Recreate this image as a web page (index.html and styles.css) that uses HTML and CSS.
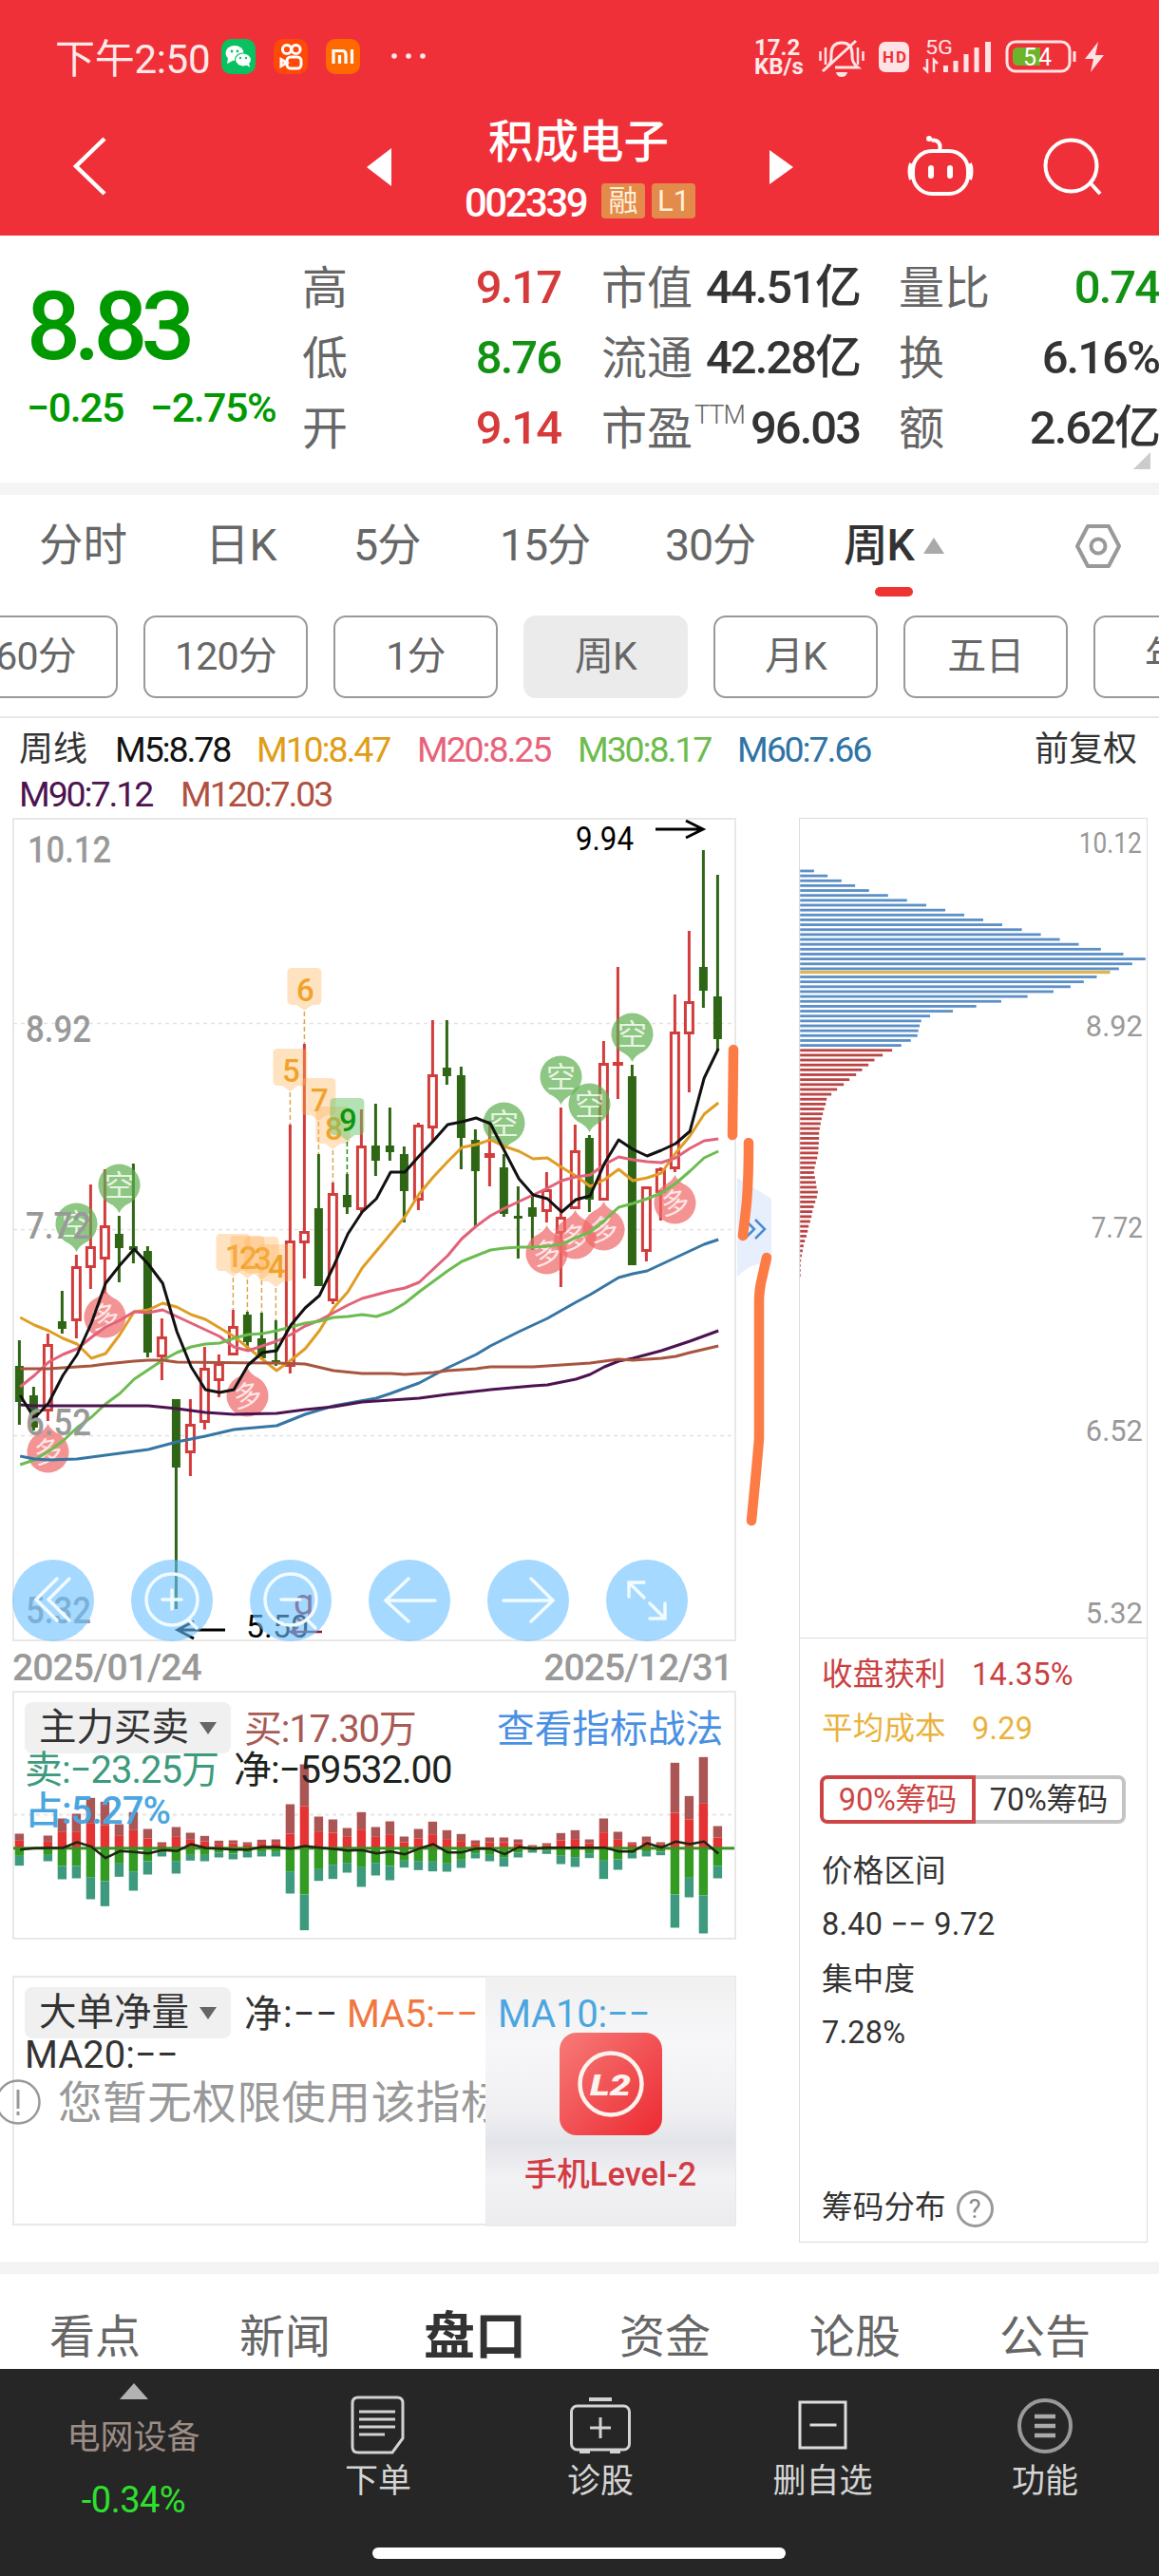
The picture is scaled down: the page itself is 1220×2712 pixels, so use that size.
FILE: index.html
```html
<!DOCTYPE html>
<html lang="zh-CN">
<head>
<meta charset="utf-8">
<title>积成电子 002339</title>
<link rel="stylesheet" href="styles.css">
</head>
<body>
<header class="top">
  <div class="status">
    <span class="clock">下午2:50</span>
    <svg class="apps" width="236" height="40" viewBox="228 40 236 40">
      <rect x="233" y="41" width="36" height="37" rx="10" fill="#08c160"/>
      <ellipse cx="247" cy="56" rx="9.5" ry="8" fill="#fff"/><path d="M240 61l-1 6 6-3z" fill="#fff"/>
      <ellipse cx="256" cy="63" rx="8.5" ry="7" fill="#fff" stroke="#08c160" stroke-width="1.2"/><path d="M259 68l4 3-1-5z" fill="#fff"/>
      <g fill="#08c160"><circle cx="244" cy="54" r="1.4"/><circle cx="250" cy="54" r="1.4"/><circle cx="253" cy="61" r="1.2"/><circle cx="259" cy="61" r="1.2"/></g>
      <rect x="288" y="41" width="36" height="37" rx="10" fill="#ff4906"/>
      <g fill="none" stroke="#fff" stroke-width="3"><circle cx="302" cy="52" r="4.6"/><circle cx="311.5" cy="52" r="4.6"/><rect x="302" y="60" width="15" height="12" rx="4"/><path d="M302 66l-6-3.500v7z"/></g>
      <rect x="343" y="41" width="36" height="37" rx="10" fill="#ff6a00"/>
      <path d="M351 67V53.500h9q4 0 4 4V67M357.500 58v9M370.500 52v15" fill="none" stroke="#fff" stroke-width="3.200"/>
      <g fill="#ffe9e9"><circle cx="415" cy="59" r="2.800"/><circle cx="430" cy="59" r="2.800"/><circle cx="445" cy="59" r="2.800"/></g>
    </svg>
    <span class="speed">17.2<br>KB/s</span>
    <svg class="sys" width="310" height="44" viewBox="856 38 310 44">
      <g fill="none" stroke="#ffe3e4" stroke-width="3">
        <path d="M871 70q4-3 4-10v-3q0-12 11-12t11 12v3q0 6 6 11h-24M866 75L901 43"/>
        <path d="M869 50v18M863.500 54v10M903 50v18M908.500 54v10" stroke-width="2.500"/>
      </g>
      <path d="M880 76h12q-1 5-6 5t-6-5z" fill="#ffe3e4"/>
      <rect x="925" y="44" width="32" height="32" rx="7" fill="#ffe3e4"/>
      <text x="929" y="66" font-size="17" font-weight="700" fill="#ef3037" textLength="25">HD</text>
      <text x="974" y="57" font-size="21" fill="#ffe3e4" textLength="29" lengthAdjust="spacingAndGlyphs">5G</text>
      <path d="M976 62v13l-4-4M983 76V63l4 4" fill="none" stroke="#ffe3e4" stroke-width="2.500"/>
      <path d="M993 69h5v7h-5zM1003.500 64h5v12h-5zM1014.500 57h5v19h-5zM1025.500 50h5v26h-5zM1037 44h6v32h-6z" fill="#ffe3e4"/>
      <rect x="1060" y="44" width="66" height="31" rx="9" fill="none" stroke="#ffe3e4" stroke-width="3"/>
      <path d="M1095 50v19h-23q-6 0-6-5v-9q0-5 6-5z" fill="#6cb52a"/>
      <path d="M1131 54v11" stroke="#ffe3e4" stroke-width="3"/>
      <text x="1077" y="69" font-size="25" fill="#fff" textLength="30">54</text>
      <path d="M1156 44l-14 18h9l-3 14 14-18h-9z" fill="#ffe3e4"/>
    </svg>
  </div>
  <div class="titlebar">
    <svg class="back" width="46" height="70" viewBox="72 138 46 70"><path d="M110 145L80 174l30 29" fill="none" stroke="#fff" stroke-width="4.500"/></svg>
    <svg class="prev" width="26" height="40" viewBox="0 0 26 40"><path d="M26 0v40L0 20z" fill="#fff"/></svg>
    <div class="name">
      <h1>积成电子</h1>
      <div class="code"><span>002339</span><b>融</b><b>L1</b></div>
    </div>
    <svg class="next" width="26" height="36" viewBox="0 0 26 36"><path d="M0 0v36l25-18z" fill="#fff"/></svg>
    <svg class="robot" width="76" height="68" viewBox="952 141 76 68">
      <g fill="none" stroke="#fff" stroke-width="4"><rect x="961" y="159" width="58" height="45" rx="20"/><path d="M989 159q2-9-4-11-3-1-5 0M959 172q-3 8 0 17M1021 172q3 8 0 17"/></g>
      <circle cx="978" cy="146" r="3" fill="#fff"/><path d="M980 177v8M1000 177v8" stroke="#fff" stroke-width="6" stroke-linecap="round"/>
    </svg>
    <svg class="search" width="66" height="66" viewBox="1098 142 66 66"><g fill="none" stroke="#fff" stroke-width="4"><circle cx="1129.500" cy="174.500" r="27"/><path d="M1150 193l10 11"/></g></svg>
  </div>
</header>

<section class="quote">
  <div class="price">
    <div class="last">8.83</div>
    <div class="chg"><span>−0.25</span><span>−2.75%</span></div>
  </div>
  <dl>
    <dt>高</dt><dd class="up">9.17</dd>
    <dt>低</dt><dd class="down">8.76</dd>
    <dt>开</dt><dd class="up">9.14</dd>
  </dl>
  <dl>
    <dt>市值</dt><dd>44.51亿</dd>
    <dt>流通</dt><dd>42.28亿</dd>
    <dt>市盈<sup>TTM</sup></dt><dd>96.03</dd>
  </dl>
  <dl>
    <dt>量比</dt><dd class="down">0.74</dd>
    <dt>换</dt><dd>6.16%</dd>
    <dt>额</dt><dd>2.62亿</dd>
  </dl>
  <i class="corner"></i>
</section>

<nav class="periods">
  <span class="p1">分时</span><span class="p2">日K</span><span class="p3">5分</span><span class="p4">15分</span><span class="p5">30分</span><span class="p6 on">周K<i></i></span>
  <svg width="50" height="48" viewBox="0 0 50 48"><g fill="none" stroke="#999" stroke-width="4"><path d="M14 3h22l11 21-11 21H14L3 24z" stroke-linejoin="round"/><circle cx="25" cy="24" r="7.500"/></g></svg>
</nav>
<nav class="pills">
  <span>60分</span><span>120分</span><span>1分</span><span class="on">周K</span><span>月K</span><span>五日</span><span>年K</span>
</nav>

<section class="legend">
  <p><span class="cap">周线</span><span class="m5">M5:8.78</span><span class="m10">M10:8.47</span><span class="m20">M20:8.25</span><span class="m30">M30:8.17</span><span class="m60">M60:7.66</span><span class="adj">前复权</span></p>
  <p><span class="m90">M90:7.12</span><span class="m120">M120:7.03</span></p>
</section>

<main class="charts">
  <div class="left">
    <svg id="kline" width="762" height="868" viewBox="13 861 762 868"></svg>
    <div class="dates"><span>2025/01/24</span><span>2025/12/31</span></div>
    <section class="panel flowpanel">
      <svg id="flow" width="762" height="262" viewBox="13 1780.500 762 262"></svg>
      <div class="lines">
        <p><span class="pick">主力买卖<i></i></span><span class="buy">买:17.30万</span><span class="link">查看指标战法</span></p>
        <p><span class="sell">卖:−23.25万</span><span class="net">净:−59532.00</span></p>
        <p><span class="pct">占:5.27%</span></p>
      </div>
    </section>
    <section class="panel bigpanel">
      <div class="promo">
        <svg width="110" height="110" viewBox="0 0 110 110">
          <defs><linearGradient id="lv" x1="0" y1="0" x2="1" y2="1"><stop offset="0" stop-color="#f77b78"/><stop offset="1" stop-color="#ec2a32"/></linearGradient></defs>
          <rect x="1" y="1" width="108" height="108" rx="18" fill="url(#lv)"/>
          <circle cx="55" cy="55" r="32.500" fill="none" stroke="#fdf3ee" stroke-width="4.500"/>
          <text x="33" y="67" font-size="32" font-weight="900" font-style="italic" fill="#fdf3ee" textLength="43" lengthAdjust="spacingAndGlyphs">L2</text>
        </svg>
        <span>手机Level-2</span>
      </div>
      <div class="lines">
        <p><span class="pick">大单净量<i></i></span><span class="n0">净:−−</span><span class="n5">MA5:−−</span><span class="n10">MA10:−−</span></p>
        <p><span class="n20">MA20:−−</span></p>
      </div>
      <div class="deny">
        <svg width="50" height="50" viewBox="0 0 50 50"><circle cx="25" cy="25" r="22.500" fill="none" stroke="#999" stroke-width="2.500"/><path d="M25 12v20M25 35v4" stroke="#999" stroke-width="3"/></svg>
        <span>您暂无权限使用该指标</span>
      </div>
    </section>
  </div>

  <aside class="chips">
    <svg id="chip" width="367" height="864" viewBox="841 861 367 864"></svg>
    <div class="info">
      <p class="red"><span>收盘获利</span><span>14.35%</span></p>
      <p class="gold"><span>平均成本</span><span>9.29</span></p>
      <div class="seg"><span class="on">90%筹码</span><span>70%筹码</span></div>
      <p>价格区间</p>
      <p class="num">8.40 −− 9.72</p>
      <p>集中度</p>
      <p class="num">7.28%</p>
      <p class="foot">筹码分布<i>?</i></p>
    </div>
  </aside>

  <svg class="marks" width="50" height="520" viewBox="765 1095 50 520">
    <path d="M776 1240q20 12 36 22v70q-18-6-36 12z" fill="#e6effb"/>
    <path d="M784 1284l10 10-10 10M795 1284l10 10-10 10" fill="none" stroke="#4a8bd4" stroke-width="2.500"/>
    <g fill="none" stroke="#fd7b45" stroke-width="10.500" stroke-linecap="round" stroke-linejoin="round">
      <path d="M772 1105L771 1195M788 1203Q788 1250 785 1275L782 1301M807 1324L802 1346Q799 1358 799 1372V1515Q796 1550 794 1570L791 1601"/>
    </g>
  </svg>
</main>

<nav class="news">
  <span>看点</span><span>新闻</span><span class="on">盘口</span><span>资金</span><span>论股</span><span>公告</span>
</nav>

<footer class="bar">
  <div class="sector"><i></i><span>电网设备</span><b>-0.34%</b></div>
  <div class="act"><svg width="66" height="62" viewBox="0 0 66 62"><g fill="none" stroke="#d2d2d2" stroke-width="3"><path d="M12 2h41q6 0 6 6v37L48 60H12q-6 0-6-6V8q0-6 6-6z"/><path d="M13 17h38M13 25h38M13 33h38M13 41h27"/></g></svg><span>下单</span></div>
  <div class="act"><svg width="66" height="62" viewBox="0 0 66 62"><g fill="none" stroke="#d2d2d2" stroke-width="3"><rect x="2.500" y="11" width="61" height="46" rx="6"/><path d="M33 23v22M22 34h22"/><path d="M21 4h24M11 59h11M43 59h11" stroke-width="4"/></g></svg><span>诊股</span></div>
  <div class="act"><svg width="66" height="62" viewBox="0 0 66 62"><g fill="none" stroke="#dcdcdc" stroke-width="3"><rect x="9" y="7" width="48" height="48"/><path d="M19.500 31h28"/></g></svg><span>删自选</span></div>
  <div class="act"><svg width="66" height="62" viewBox="0 0 66 62"><circle cx="33" cy="32" r="27" fill="none" stroke="#999" stroke-width="4"/><path d="M22 22h22M22 32h22M22 42h22" stroke="#aaa" stroke-width="4.500"/></svg><span>功能</span></div>
  <div class="home"></div>
</footer>
<script src="charts.js"></script>
</body>
</html>
```

FILE: styles.css
```css
* { box-sizing: border-box; }
body {
  margin: 0;
  width: 1220px;
  height: 2712px;
  overflow: hidden;
  background: #fff;
  color: #333;
  font-family: Roboto, "Noto Sans CJK SC", sans-serif;
}
h1, p, dl, dt, dd { margin: 0; font-weight: 400; }
i { font-style: normal; }
svg { display: block; flex: none; }
svg text { font-family: Roboto, "Noto Sans CJK SC", sans-serif; }

/* header */
.top { height: 248px; background: #f03038; color: #fff; }
.status { height: 100px; padding: 20px 0 0 58px; display: flex; align-items: center; }
.clock { width: 170px; font-size: 42px; letter-spacing: -.3px; color: #ffe9e9; white-space: nowrap; margin-top: -4px; }
.speed { margin-left: 330px; width: 62px; font-size: 24px; line-height: 20px; font-weight: 700; color: #ffe9e9; }
.titlebar { height: 148px; padding-left: 72px; display: flex; align-items: flex-start; }
.back { margin-top: 39px; }
.prev { margin: 56px 0 0 268px; }
.name { width: 394px; margin-right: 4px; text-align: center; }
.name h1 { margin-top: 17px; font-size: 47.500px; line-height: 66px; font-weight: 500; }
.code { height: 44px; display: flex; align-items: center; margin: 6px 0 0 77px; font-size: 42px; font-weight: 500; letter-spacing: -2.500px; }
.code span { width: 144px; text-align: left; margin-top: 4px; }
.code b { width: 46px; height: 37px; margin-right: 7px; border-radius: 4px; background: #e38b4b; color: #fff0d8; font-size: 31px; font-weight: 400; letter-spacing: 0; line-height: 37px; }
.next { margin-top: 58px; }
.robot { margin: 41px 0 0 116px; }
.search { margin: 42px 0 0 68px; }

/* quote */
.quote { position: relative; height: 273px; padding-top: 16px; border-bottom: 13px solid #f4f4f4; display: flex; }
.price { width: 318px; padding-left: 28px; color: #009900; white-space: nowrap; }
.last { margin-top: 30px; height: 100px; line-height: 100px; font-size: 100px; font-weight: 500; letter-spacing: -7px; }
.chg { margin-top: 10px; font-size: 43px; line-height: 50px; font-weight: 500; letter-spacing: -1.500px; display: flex; }
.chg span:first-child { width: 130px; }
.quote dl { width: 272px; margin-right: 43px; display: grid; grid-template-columns: auto 1fr; grid-auto-rows: 74px; line-height: 74px; }
.quote dl:nth-of-type(2) { margin-right: 41px; }
.quote dl:nth-of-type(3) { width: 274px; margin-right: 0; }
.quote dt { display: flex; font-size: 48px; color: #666; font-weight: 400; font-family: "Noto Sans CJK SC", sans-serif; line-height: 70px; white-space: nowrap; width: 0; }
.quote sup { font-family: Roboto, sans-serif; font-size: 27px; line-height: 50px; margin-left: 2px; letter-spacing: -1px; font-weight: 300; }
.quote dd { text-align: right; font-size: 49px; font-weight: 500; letter-spacing: -2px; padding-top: 2px; height: 74px; white-space: nowrap; }
.up { color: #d63a3a; }
.down { color: #129212; }
.corner { position: absolute; left: 1193px; top: 228px; border-left: 18px solid transparent; border-bottom: 18px solid #ccc; }

/* period tabs */
.periods { height: 127px; padding-left: 41px; display: flex; font-size: 46.500px; line-height: 107px; color: #666; white-space: nowrap; }
.p1 { width: 175px; } .p2 { width: 156px; } .p3 { width: 154px; } .p4 { width: 174px; } .p5 { width: 188px; } .p6 { width: 243px; }
.p3, .p4, .p5 { letter-spacing: -1.200px; }
.p6.on { position: relative; font-weight: 500; color: #333; letter-spacing: -1px; }
.p6 i { display: inline-block; margin-left: 10px; border: 11px solid transparent; border-top: 0; border-bottom: 17px solid #aaa; vertical-align: 7px; }
.p6::after { content: ""; position: absolute; left: 33px; top: 97px; width: 40px; height: 10px; border-radius: 5px; background: #e33; }
.periods svg { margin-top: 30px; }
.pills { height: 108px; padding-bottom: 20px; width: 1220px; overflow: hidden; border-bottom: 2px solid #e8e8e8; display: flex; gap: 27px; }
.pills span { flex: none; width: 173px; height: 87px; border: 2px solid #999; border-radius: 13px; text-align: center; font-size: 41px; line-height: 83px; color: #666; letter-spacing: -.8px; }
.pills span:first-child { margin-left: -49px; }
.pills .on { background: #ebebeb; border-color: #ebebeb; }

/* moving average legend */
.legend { height: 105px; padding: 10px 0 0 20px; font-size: 37.500px; font-weight: 500; letter-spacing: -2.100px; }
.legend p { height: 47px; line-height: 47px; display: flex; white-space: nowrap; }
.cap { width: 101px; font-size: 36px; letter-spacing: 0; font-weight: 400; }
.m5 { width: 149px; color: #111; }
.m10 { width: 169px; color: #e09d16; }
.m20 { width: 169px; color: #e8627a; }
.m30 { width: 168px; color: #6cbc4c; }
.m60 { width: 313px; color: #2f74a5; }
.m90 { width: 170px; color: #4d1250; }
.m120 { color: #b05040; }
.adj { font-size: 36px; font-weight: 400; letter-spacing: 0; }

/* charts */
.charts { position: relative; height: 1520px; display: flex; padding-left: 13px; }
.left { width: 828px; }
.dates { height: 51px; width: 760px; display: flex; justify-content: space-between; padding: 0 2px 0 0; font-size: 39px; line-height: 54px; font-weight: 500; color: #999; letter-spacing: -.9px; }
.panel { position: relative; width: 762px; height: 262px; border: 2px solid #e8e8e8; overflow: visible; }
.panel > svg { position: absolute; left: -2px; top: -2px; }
.bigpanel { margin-top: 38px; height: 263px; }
.lines { position: relative; padding: 10px 0 0 11px; font-size: 40px; font-weight: 400; white-space: nowrap; }
.lines p { display: flex; height: 43px; line-height: 43px; align-items: center; }
.lines p:first-child { height: 54px; }
.lines p:first-child span { padding-top: 2px; }
.lines p + p { position: relative; top: -4px; }
.pick { width: 217px; height: 54px; margin-right: 14px; padding-left: 15px; border-radius: 8px; background: #f0f0f0; font-size: 39.500px; line-height: 50px; }
.pick i { display: inline-block; margin-left: 11px; border: 9px solid transparent; border-bottom: 0; border-top: 13px solid #666; vertical-align: 6px; }
.buy { width: 266px; color: #a85a55; letter-spacing: -1.200px; }
.link { color: #4a90e2; font-size: 39.700px; }
.sell { width: 220px; color: #3d9a7d; }
.net { color: #1c231c; }
.pct { color: #4ba6e0; letter-spacing: -.9px; font-weight: 500; }
.flowpanel .lines p + p { letter-spacing: -1px; }
.n0 { width: 108px; letter-spacing: 1px; }
.n5 { width: 159px; color: #f07840; letter-spacing: -.2px; }
.n10 { color: #4ba6e0; letter-spacing: -.2px; }
.promo { position: absolute; left: 496px; top: -1px; width: 263px; height: 263px; padding-top: 58px; display: flex; flex-direction: column; align-items: center; background: linear-gradient(180deg, #f0f0f1 0, #f7f7f9 28%, #efeff2 55%, #e3e4e9 66%, #f2f1f4 80%, #ecebed 100%); color: #d23c44; font-size: 34.500px; font-weight: 500; line-height: 44px; }
.promo span { margin-top: 18px; }
.deny { position: relative; width: 517px; margin-left: -21px; height: 60px; margin-top: -5px; overflow: hidden; display: flex; align-items: center; color: #999; font-size: 46.500px; font-weight: 400; letter-spacing: .6px; line-height: 60px; white-space: nowrap; }
.deny svg { margin-top: -3px; }
.deny span { margin-left: 17px; }

/* chip distribution */
.chips { width: 367px; height: 1500px; border: 1px solid #ddd; }
.chips > svg { margin: -1px 0 0 -1px; border-bottom: 1px solid #ddd; }
.info { padding: 10px 0 0 23px; font-size: 32.500px; font-weight: 400; color: #333; }
.info p { height: 57px; line-height: 57px; display: flex; letter-spacing: .2px; }
.info p span:first-child { width: 158px; }
.info .num { line-height: 54px; }
.red { color: #c94040; }
.gold { color: #e9b23c; }
.seg { margin: 20px 0 22px -2px; height: 51px; display: flex; line-height: 44px; text-align: center; letter-spacing: -.2px; }
.seg span { width: 158px; border: 4px solid #c4c4c4; border-left: 0; border-radius: 0 8px 8px 0; }
.seg .on { width: 164px; border: 4px solid #cc4444; border-radius: 8px 0 0 8px; color: #cc4444; }
.info .foot { margin-top: 126px; }
.foot i { width: 39px; height: 39px; margin: 10px 0 0 11px; border: 3px solid #999; border-radius: 50%; color: #888; font-size: 27px; line-height: 34px; text-align: center; }
.marks { position: absolute; left: 765px; top: 234px; }

/* lower tabs */
.news { height: 113px; border-top: 13px solid #f4f4f4; padding-top: 27px; display: flex; font-size: 48px; line-height: 80px; color: #666; text-align: center; }
.news span { width: 200px; }
.news .on { font-weight: 700; font-size: 54px; color: #333; }

/* bottom bar */
.bar { position: relative; height: 218px; background: #262626; display: flex; color: #ccc; font-size: 35px; text-align: center; }
.sector { width: 281px; display: flex; flex-direction: column; align-items: center; }
.sector i { margin-top: 15px; border: 15px solid transparent; border-top: 0; border-bottom: 17px solid #b3b3b3; }
.sector span { margin-top: 17px; line-height: 48px; color: #9c8d85; }
.sector b { margin-top: 17px; line-height: 48px; font-size: 38px; letter-spacing: -.5px; font-weight: 400; color: #2ee02e; }
.act { width: 234px; padding-top: 28px; display: flex; flex-direction: column; align-items: center; color: #d4d4d4; line-height: 50px; }
.act span { margin-top: 4px; }
.home { position: absolute; left: 392px; top: 188px; width: 435px; height: 12px; border-radius: 6px; background: #fff; }
```

FILE: charts.js
```js
const X0 = 20.4, STEP = 15;
const cx = i => X0 + STEP * i;

// candles: [rising, high, body top, body bottom, low]
const candles = [
[0,1411,1438,1476,1500],[0,1460,1469,1503,1506],[1,1404,1416,1485,1496],[0,1359,1391,1399,1404],[1,1321,1334,1390,1409],
[1,1247,1313,1334,1357],[1,1231,1291,1325,1362],[0,1280,1299,1314,1350],[0,1225,1312,1316,1330],[0,1312,1317,1424,1429],
[1,1388,1408,1428,1453],[0,1473,1473,1545,1694],[1,1473,1500,1529,1554],[1,1418,1441,1497,1505],[1,1426,1436,1453,1471],
[1,1379,1397,1426,1427],[0,1381,1384,1413,1422],[0,1382,1409,1430,1430],[0,1390,1432,1435,1438],[1,1184,1307,1438,1446],
[1,1099,1297,1308,1346],[0,1215,1272,1354,1354],[1,1245,1257,1369,1373],[0,1236,1258,1271,1278],[1,1168,1207,1273,1276],
[0,1162,1206,1222,1238],[0,1166,1206,1213,1222],[0,1207,1215,1254,1287],[1,1182,1185,1263,1274],[1,1074,1132,1187,1202],
[0,1074,1124,1133,1142],[0,1123,1132,1198,1231],[0,1189,1200,1233,1291],[1,1180,1214,1219,1249],[0,1215,1229,1278,1281],
[0,1249,1280,1283,1325],[0,1258,1271,1281,1316],[1,1234,1253,1275,1287],[1,1166,1282,1298,1355],[1,1184,1212,1272,1272],
[0,1195,1198,1263,1276],[1,1096,1120,1263,1263],[1,1018,1118,1122,1157],[0,1121,1133,1332,1332],[1,1249,1250,1317,1328],
[1,1229,1231,1255,1285],[1,1047,1087,1230,1234],[1,980,1055,1088,1150],[0,895,1018,1043,1061],[0,921,1049,1094,1105]];

// averages: y per week, or [week, y] pairs
const averages = [
["#e09d24",[1387,1395,1401,1409,1415,1430,1425,1405,1381,1379,1372,1376,1384,1389,1398,1407,1419,1431,1443,1432,1420,1401,1377,1360,1335,1317,1299,1281,1257,1239,1223,1208,1205,1200,1207,1212,1220,1219,1229,1238,1249,1242,1231,1243,1240,1235,1214,1196,1173,1161]],
["#e2627a",[1460,1448,1434,1426,1420,1408,1397,1390,1381,1382,1379,1386,1393,1400,1407,1418,1422,1417,1412,1405,1396,1390,1382,1374,1367,1363,1359,1356,1350,1336,1322,1304,1291,1280,1272,1265,1258,1251,1243,1239,1237,1226,1218,1221,1223,1224,1219,1209,1201,1199]],
["#6cbc50",[1542,1537,1528,1517,1503,1492,1478,1467,1452,1442,1432,1424,1418,1415,1414,1409,1405,1404,1401,1397,1393,1391,1387,1386,1384,1386,1381,1372,1360,1349,1338,1328,1322,1316,1314,1313,1313,1312,1310,1303,1297,1285,1271,1267,1262,1256,1246,1233,1219,1212]],
["#3676a4",[[0,1533],[1,1536],[2,1537],[4,1536],[6,1532],[9,1526],[11,1518],[13,1512],[15,1505],[18,1501],[20,1489],[22,1480],[25,1472],[26,1467],[28,1456],[30,1440],[32,1426],[33,1417],[35,1402],[37,1388],[39,1371],[40,1363],[42,1345],[43,1341],[44,1338],[46,1324],[48,1310],[49,1305]]],
["#4d1250",[[0,1479],[1,1480],[9,1480],[11,1483],[13,1487],[15,1489],[18,1488],[20,1484],[22,1481],[24,1476],[26,1474],[28,1472],[30,1468],[33,1463],[36,1459],[37,1458],[39,1452],[40,1447],[41,1439],[42,1433],[43,1430],[45,1422],[47,1412],[49,1401]]],
["#a8553f",[[0,1441],[2,1441],[5,1438],[6,1436],[8,1433],[9,1432],[10,1432],[11,1434],[18,1435],[20,1436],[22,1443],[24,1446],[26,1446],[27,1447],[29,1445],[30,1443],[32,1441],[33,1439],[36,1439],[38,1437],[40,1435],[42,1431],[43,1432],[45,1430],[46,1428],[47,1424],[49,1417]]],
["#111",[1469,1493,1477,1448,1426,1393,1351,1332,1315,1331,1351,1402,1439,1463,1466,1463,1437,1424,1422,1395,1377,1364,1333,1299,1276,1262,1234,1234,1217,1201,1184,1181,1177,1183,1212,1241,1258,1262,1276,1263,1259,1225,1200,1210,1217,1211,1204,1191,1135,1104]]];

const rect = (x, y, w, h, fill, extra = "") => `<rect x="${x}" y="${y}" width="${w}" height="${h}" fill="${fill}" ${extra}/>`;
const label = (t, x, y, w, size, fill, weight = 400, extra = "") =>
  `<text x="${x}" y="${y}" font-size="${size}" font-weight="${weight}" fill="${fill}" textLength="${w}" lengthAdjust="spacingAndGlyphs" ${extra}>${t}</text>`;
const line = (pts, color, w = 3) => `<polyline points="${pts.map(p => p.join()).join(" ")}" fill="none" stroke="${color}" stroke-width="${w}" stroke-linejoin="round"/>`;

function kline() {
  let s = `<rect x="14" y="862" width="760" height="865" fill="none" stroke="#e8e8e8" stroke-width="2"/>`;
  for (const y of [1077.5, 1294.5, 1511.5]) s += `<path d="M14 ${y}H773" stroke="#e2e2e2" stroke-width="1.500" stroke-dasharray="4 4"/>`;
  candles.forEach(([up, hi, t, b, lo], i) => {
    const x = cx(i), c = up ? "#d23c3c" : "#2f6615";
    s += rect(x - 1.5, hi, 3, lo - hi, c);
    if (up && b - t > 8) s += rect(x - 4, t + .5, 8, b - t - 1, "#fff", `stroke="${c}" stroke-width="3"`);
    else s += up ? rect(x - 5.5, t, 11, b - t, c) : rect(x - 4.5, t, 9, Math.max(b - t, 3), c);
  });
  for (const [x, y] of [[80.5,1289],[125.5,1248],[530.5,1183],[590.5,1134],[620.5,1163],[665.5,1089]])
    s += `<g opacity=".8"><path d="M${x - 12} ${y + 18}Q${x - 3} ${y + 22} ${x} ${y + 29}Q${x + 3} ${y + 22} ${x + 12} ${y + 18}A22 22 0 1 0 ${x - 12} ${y + 18}" fill="#5fae50" fill-opacity=".88"/><text x="${x}" y="${y + 11}" font-size="31" text-anchor="middle" fill="#e2f3dd">空</text></g>`;
  for (const [x, y] of [[50.5,1528],[110.5,1386],[260.5,1469],[575.5,1319],[605.5,1303],[635.5,1294],[710.5,1266]])
    s += `<g opacity=".8"><path d="M${x - 12} ${y - 18}Q${x - 3} ${y - 22} ${x} ${y - 29}Q${x + 3} ${y - 22} ${x + 12} ${y - 18}A22 22 0 1 1 ${x - 12} ${y - 18}" fill="#f06a6a" fill-opacity=".9"/><text x="${x}" y="${y + 11}" font-size="30" text-anchor="middle" fill="#ffe2e2" transform="rotate(-10 ${x} ${y})">多</text></g>`;
  for (const [color, v] of averages)
    s += line(v.map((p, i) => Array.isArray(p) ? [cx(p[0]) + .8, p[1]] : [cx(i) + .8, p]), color);
  [15,16,17,18,19,20,21,22,23].forEach((i, n) => {
    const hi = candles[i][1], x = cx(i), t = hi - 80, g = n === 8;
    s += `<path d="M${x} ${hi - 34}V${hi}" stroke="${g ? "#209020" : "#d9a850"}" stroke-width="1.500" stroke-dasharray="5 3"/>`;
    s += `<path d="M${x - 13} ${t}h26q5 0 5 5v29q0 5-5 5h-5l-8 6-8-6h-5q-5 0-5-5v-29q0-5 5-5z" fill="${g ? "#6cc66c" : "#ffb45a"}" fill-opacity="${g ? .5 : .38}"/>`;
    s += `<text x="${x + 1}" y="${t + 35}" font-size="33" font-weight="500" text-anchor="middle" fill="${g ? "#0c960c" : "#f0a32c"}">${n + 1}</text>`;
  });
  s += label("10.12", 29, 908, 88, 39, "#999", 500) + label("8.92", 27, 1097, 69, 39, "#999", 500) + label("7.72", 27, 1304, 69, 39, "#999", 500)
     + label("6.52", 27, 1511, 69, 39, "#999", 500) + label("5.32", 27, 1709, 69, 39, "#999", 500);
  s += label("9.94", 606, 895, 61, 35, "#000") + `<path d="M690 873H739M722 864L740 873 722 882" fill="none" stroke="#000" stroke-width="3"/>`;
  s += label("5.50", 259, 1724, 66, 33, "#000") + `<path d="M237 1716H187M204 1707L187 1716 204 1725" fill="none" stroke="#000" stroke-width="3"/>`;
  s += `<text x="309" y="1700" font-size="38" fill="#a0202a">g</text><path d="M339 1718H307M314 1713L306 1718 314 1723" fill="none" stroke="#8a2030" stroke-width="2.500"/>`;
  for (const x of [56,181,306,431,556,681]) s += `<circle cx="${x}" cy="1685" r="43" fill="#69bfff" fill-opacity=".6"/>`;
  s += `<g fill="none" stroke="#f2fbff" stroke-width="3.500" stroke-linecap="round">
    <path d="M60 1662L38 1684 60 1706M73 1662L51 1684 73 1706"/>
    <circle cx="181" cy="1684" r="27"/><path d="M171 1684h20M181 1674v20M199 1706l8 8"/>
    <circle cx="306" cy="1684" r="27"/><path d="M296 1684h20M324 1706l8 8"/>
    <path d="M458 1685H406M430 1662L406 1685 430 1707M530 1685H582M559 1662L582 1685 559 1707"/>
    <path d="M678 1682L662 1666M662 1681V1666H678M684 1688L700 1704M700 1688V1704H684"/></g>`;
  document.getElementById("kline").innerHTML = s;
}

// volume bars: [buy top, large buy top, large sell bottom, sell bottom], thirds of a pixel from the panel origin
const flow = [[573,595,643,674],null,[579,598,640,660],[525,568,675,717],[510,568,675,714],[460,541,710,780],[472,546,723,802],[543,580,667,709],[505,562,692,753],[558,588,660,702],[600,608,632,645],[552,583,659,699],[570,592,640,658],[580,597,640,660],[595,605,633,648],[594,603,636,654],[600,607,632,648],[592,602,631,645],[591,602,631,645],[480,573,692,762],[354,486,765,878],[519,566,685,722],[528,570,671,716],[555,583,665,696],[505,560,679,741],[552,583,665,705],[534,577,675,720],[582,600,658,680],[558,588,659,688],[535,577,661,692],[562,590,667,693],[574,596,655,681],[594,605,635,651],[585,600,640,660],[585,600,647,677],[591,603,633,648],[609,613,625,633],[603,609,626,637],[571,594,641,669],[562,590,647,678],[591,603,635,650],[525,569,658,716],[567,592,654,687],[600,607,635,651],[582,598,631,645],[600,607,630,641],[349,507,765,870],[454,528,712,774],[331,478,768,888],[549,585,675,714]];
const netLine = [623,619,618,618,600,614,650,628,631,635,625,628,606,618,620,623,623,615,615,620,612,617,621,626,625,635,629,638,620,606,632,632,620,620,638,615,620,617,617,617,617,617,629,629,603,617,598,606,598,636];
function flowChart() {
  const Y = v => 1740 + v / 3;
  let s = `<path d="M14 1911H773" stroke="#e6e6e6" stroke-width="2" stroke-dasharray="4 4"/>`;
  flow.forEach((f, i) => {
    if (!f) return;
    const x = cx(i) - 4.7, z = Y(619), [a, b, c, d] = f.map(Y);
    s += rect(x, a, 9.4, b - a, "#ab5555") + rect(x, b, 9.4, z - b, "#e53333") + rect(x, z, 9.4, c - z, "#339a22") + rect(x, c, 9.4, d - c, "#3e9a7e");
  });
  s += rect(14, Y(619) - 1.5, 759, 3, "#3f8f26") + line(netLine.map((v, i) => [cx(i) + .8, Y(v)]), "#1d260f", 2.5);
  document.getElementById("flow").innerHTML = s;
}

// chip distribution: bar ends, thirds of a pixel
const upper = [110,153,197,240,284,344,404,465,525,585,645,705,767,827,887,947,1017,1088,1158,1116,1074];
const lower = [1004,963,921,867,785,702,623,549,477,449,444,440,437,416,386,357,327,301,282,262,243,222,204,183,165,150,147,142,138,134,131,128,126,126,125,124,123,120,116,112,110,113,116,118,122,119,114,109,105,102,98,93,90,86,81,77,74,71,69,68,68,68];
function chips() {
  let s = "";
  const bar = (end, y, c, h = 2.8) => rect(842, y - h / 2, (end - 66) / 3, h, c);
  upper.forEach((e, i) => s += bar(e, 917 + i * 5.155, "#5b8fc6"));
  s += bar(1046, 1023.7, "#dcb558", 3.4);
  lower.forEach((e, i) => s += bar(e, 1028.7 + i * 5.155, i < 15 ? "#5b8fc6" : "#bb4444"));
  s += label("10.12", 1136, 898, 66, 32, "#999") + label("8.92", 1143, 1091, 60, 32, "#999") + label("7.72", 1149, 1304, 54, 32, "#999")
     + label("6.52", 1143, 1518, 60, 32, "#999") + label("5.32", 1143, 1710, 60, 32, "#999");
  document.getElementById("chip").innerHTML = s;
}
kline(); flowChart(); chips();
```
